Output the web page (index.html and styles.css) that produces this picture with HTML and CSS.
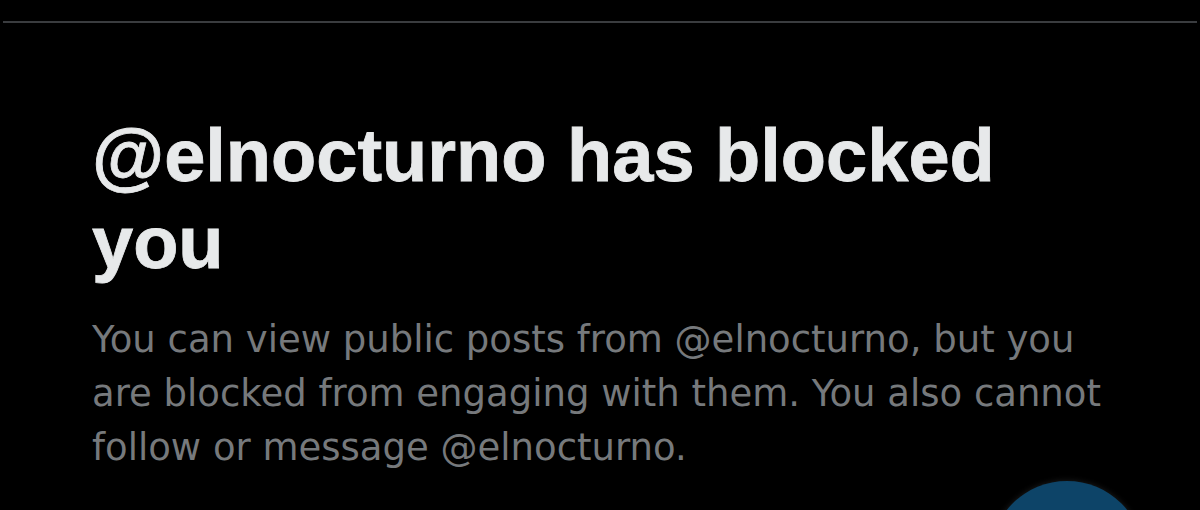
FILE: index.html
```html
<!DOCTYPE html>
<html lang="en">
<head>
    <meta charset="UTF-8">
    <meta name="viewport" content="width=device-width, initial-scale=1.0">
    <title>Blocked</title>
    <link rel="stylesheet" href="styles.css">
</head>
<body>
    <div class="screen">
        <div class="divider"></div>

        <div class="blocked-notice">
            <h1 class="blocked-title">@elnocturno has blocked you</h1>
            <p class="blocked-text">You can view public posts from @elnocturno, but you are blocked from engaging with them. You also cannot follow or message @elnocturno.</p>
        </div>

        <!-- compose button, cut off by the bottom edge -->
        <div class="fab"></div>
    </div>
</body>
</html>
```

FILE: styles.css
```css
html, body {
    margin: 0;
    padding: 0;
    height: 100%;
    background-color: #000;
    overflow: hidden;
}

.screen {
    position: relative;
    box-sizing: border-box;
    height: 100%;
    padding-top: 21px;
}

.divider {
    height: 2px;
    margin: 0 3px;
    background-color: #3a3c3f;
}

.blocked-notice {
    padding: 89px 92px 0 92px;
    width: 1016px;
}

.blocked-title {
    margin: 0;
    font-family: "Liberation Sans", Arial, sans-serif;
    font-weight: bold;
    font-size: 74px;
    line-height: 87px;
    color: #e7e9ea;
    -webkit-text-stroke: 0.8px #e7e9ea;
}

.blocked-text {
    margin: 27px 0 0 0;
    font-family: "DejaVu Sans", sans-serif;
    font-size: 37px;
    line-height: 54px;
    color: #76797c;
}

.fab {
    position: absolute;
    left: 990px;
    top: 481px;
    width: 154px;
    height: 154px;
    border-radius: 50%;
    background-color: #0d4468;
    box-shadow: 0 0 6px rgba(90, 90, 90, 0.35);
}
```
